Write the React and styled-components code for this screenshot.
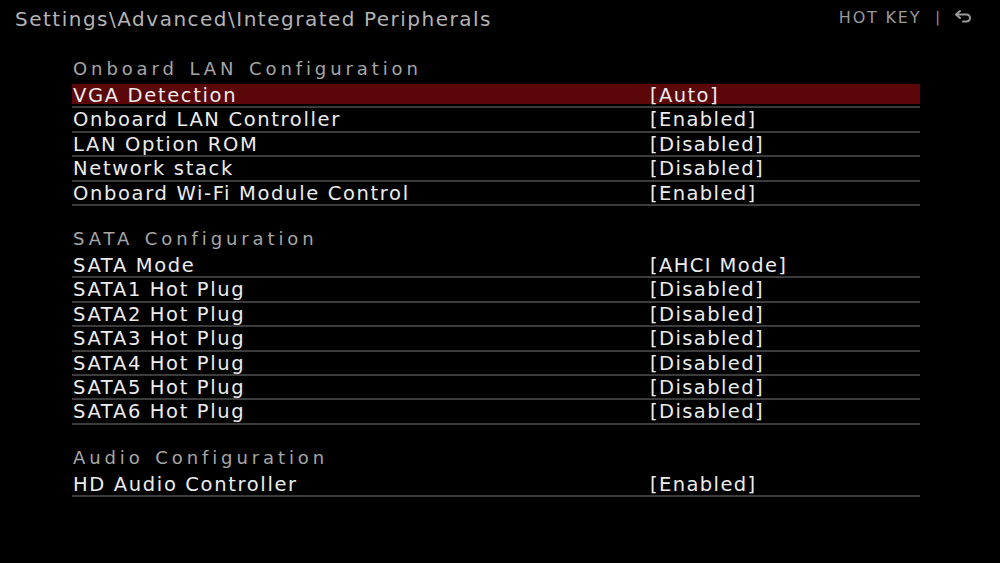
import React from "react";
import styled, { createGlobalStyle } from "styled-components";

const sections = [
  {
    title: "Onboard LAN Configuration",
    items: [
      ["VGA Detection", "[Auto]"],
      ["Onboard LAN Controller", "[Enabled]"],
      ["LAN Option ROM", "[Disabled]"],
      ["Network stack", "[Disabled]"],
      ["Onboard Wi-Fi Module Control", "[Enabled]"],
    ],
  },
  {
    title: "SATA Configuration",
    items: [
      ["SATA Mode", "[AHCI Mode]"],
      ["SATA1 Hot Plug", "[Disabled]"],
      ["SATA2 Hot Plug", "[Disabled]"],
      ["SATA3 Hot Plug", "[Disabled]"],
      ["SATA4 Hot Plug", "[Disabled]"],
      ["SATA5 Hot Plug", "[Disabled]"],
      ["SATA6 Hot Plug", "[Disabled]"],
    ],
  },
  {
    title: "Audio Configuration",
    items: [["HD Audio Controller", "[Enabled]"]],
  },
];

const BackIcon = () => (
  <svg width="20" height="16" viewBox="0 0 20 16" fill="none">
    <path
      d="M6 2 2 5.5 6 9"
      stroke="#9a9a9a"
      strokeWidth="2"
      strokeLinecap="round"
      strokeLinejoin="round"
    />
    <path
      d="M2.5 5.5h10a3.5 3.5 0 0 1 0 7H9"
      stroke="#9a9a9a"
      strokeWidth="2"
      strokeLinecap="round"
    />
  </svg>
);

const App = () => {
  return (
    <>
      <GlobalStyle />
      <Screen>
        <TopBar>
          <Breadcrumb>Settings\Advanced\Integrated Peripherals</Breadcrumb>
          <HotKeys>
            <HotKeyLabel>HOT KEY</HotKeyLabel>
            <Divider>|</Divider>
            <BackIcon />
          </HotKeys>
        </TopBar>
        <Content>
          {sections.map((section, s) => (
            <Section key={section.title}>
              <SectionTitle>{section.title}</SectionTitle>
              {section.items.map(([label, value], i) => (
                <Row key={label}>
                  <RowInner selected={s === 0 && i === 0}>
                    <Label>{label}</Label>
                    <Value>{value}</Value>
                  </RowInner>
                </Row>
              ))}
            </Section>
          ))}
        </Content>
      </Screen>
    </>
  );
};

export default App;

const GlobalStyle = createGlobalStyle`
  html, body {
    margin: 0;
    padding: 0;
    background: #000;
  }
  * {
    box-sizing: border-box;
  }
`;

const Screen = styled.div`
  width: 1000px;
  height: 563px;
  background: #000;
  font-family: "DejaVu Sans", "Liberation Sans", sans-serif;
  overflow: hidden;
`;

const TopBar = styled.div`
  height: 38px;
  display: flex;
  align-items: center;
  justify-content: space-between;
  padding: 0 26px 0 15px;
`;

const Breadcrumb = styled.div`
  font-size: 20px;
  color: #b4b4b4;
  letter-spacing: 1.5px;
`;

const HotKeys = styled.div`
  display: flex;
  align-items: center;
  gap: 12px;
  margin-top: -4px;
`;

const HotKeyLabel = styled.span`
  font-size: 16px;
  color: #9a9a9a;
  letter-spacing: 1.8px;
`;

const Divider = styled.span`
  font-size: 14px;
  color: #9a9a9a;
  margin: 0 2px;
`;

const Content = styled.div`
  padding: 0 80px 0 72px;
`;

const Section = styled.div`
  margin-top: 20px;
  &:first-child {
    margin-top: 18px;
  }
`;

const SectionTitle = styled.div`
  height: 26px;
  line-height: 26px;
  margin-bottom: 2px;
  padding-left: 1px;
  font-size: 18px;
  color: #a6a6a6;
  letter-spacing: 3.9px;
  word-spacing: 2px;
`;

const Row = styled.div`
  padding-bottom: 2.4px;
  border-bottom: 2px solid #3c3c3c;
`;

const RowInner = styled.div`
  display: flex;
  align-items: center;
  height: 20px;
  padding-top: 3px;
  background: ${(p) => (p.selected ? "#5b0608" : "transparent")};
  color: #ececec;
  font-size: 19.5px;
  letter-spacing: 1.65px;
`;

const Label = styled.span`
  width: 578px;
  padding-left: 1px;
  white-space: nowrap;
`;

const Value = styled.span`
  white-space: nowrap;
  letter-spacing: 1.4px;
`;
